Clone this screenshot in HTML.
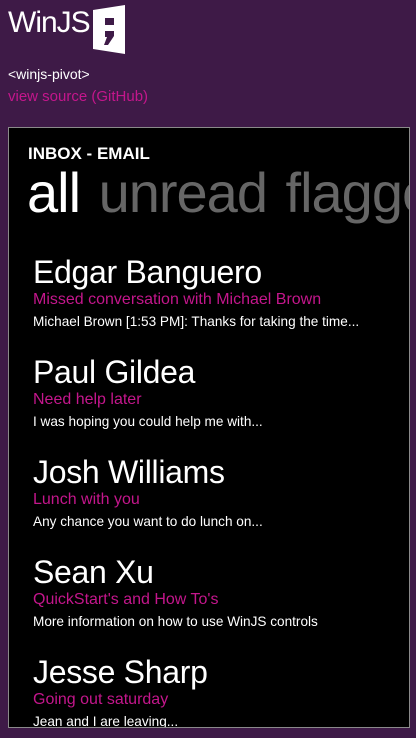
<!DOCTYPE html>
<html><head><style>
html,body{margin:0;padding:0}
body{width:416px;height:738px;background:#3e1a47;font-family:"Liberation Sans",sans-serif;position:relative;overflow:hidden;color:#fff}
.abs{position:absolute;white-space:nowrap}
#box{position:absolute;left:8px;top:127px;width:400px;height:599px;border:1px solid #8a8a8a;background:#000;overflow:hidden}
.name{position:absolute;left:24px;font-size:32px;font-weight:300;letter-spacing:-0.3px}
.subj{position:absolute;left:24px;font-size:16px;color:#c4168c}
.body{position:absolute;left:24px;font-size:13.6px}
</style></head><body>
<div class="abs" style="left:8px;top:6px;font-size:30px;letter-spacing:-1px">WinJS</div>
<svg class="abs" style="left:93px;top:5px" width="33" height="49" viewBox="0 0 33 49">
<polygon points="0,5 32,0 32,49 0,44" fill="#fff"/>
<rect x="12" y="13" width="9" height="7" fill="#3e1a47"/>
<path d="M12 26 h9 v5 l-6 9 h-4 l3 -8 h-2z" fill="#3e1a47"/>
</svg>
<div class="abs" style="left:8px;top:66px;font-size:14px">&lt;winjs-pivot&gt;</div>
<div class="abs" style="left:8px;top:88px;font-size:15px;color:#c4168c">view source (GitHub)</div>
<div id="box">
<div class="abs" style="left:19px;top:16px;font-size:17px;font-weight:bold">INBOX - EMAIL</div>
<div class="abs" style="left:18px;top:32px;font-size:56px;font-weight:300;letter-spacing:-1px;word-spacing:4px">all <span style="color:#666">unread flagged</span></div>
<div class="name" style="top:126px">Edgar Banguero</div>
<div class="subj" style="top:163px">Missed conversation with Michael Brown</div>
<div class="body" style="top:186px">Michael Brown [1:53 PM]: Thanks for taking the time...</div>
<div class="name" style="top:226px">Paul Gildea</div>
<div class="subj" style="top:263px">Need help later</div>
<div class="body" style="top:286px">I was hoping you could help me with...</div>
<div class="name" style="top:326px">Josh Williams</div>
<div class="subj" style="top:363px">Lunch with you</div>
<div class="body" style="top:386px">Any chance you want to do lunch on...</div>
<div class="name" style="top:426px">Sean Xu</div>
<div class="subj" style="top:463px">QuickStart's and How To's</div>
<div class="body" style="top:486px">More information on how to use WinJS controls</div>
<div class="name" style="top:526px">Jesse Sharp</div>
<div class="subj" style="top:563px">Going out saturday</div>
<div class="body" style="top:586px">Jean and I are leaving...</div>
</div>
</body></html>
